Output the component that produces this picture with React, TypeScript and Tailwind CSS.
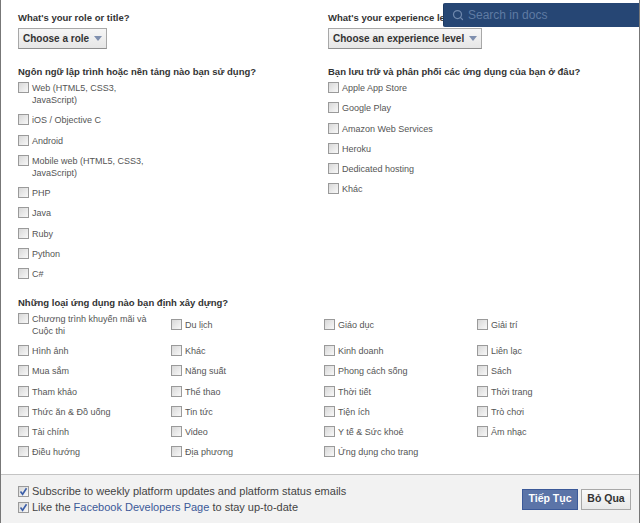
import React from "react";
import { Search } from "lucide-react";

function Box({ checked }: { checked?: boolean }) {
  return (
    <span className="shrink-0 w-[11px] h-[11px] border border-[#9a9a9a] bg-gradient-to-br from-[#d8d8d8] to-[#f8f8f8] flex items-center justify-center">
      {checked && (
        <svg viewBox="0 0 11 11" className="w-[11px] h-[11px] shrink-0">
          <path d="M2.5 5.5 L4.6 8.3 L8.5 2.2" fill="none" stroke="#3b5ea8" strokeWidth="1.6" />
        </svg>
      )}
    </span>
  );
}

function Item({ label, center, width }: { label: React.ReactNode; center?: boolean; width?: string }) {
  return (
    <div className={`flex ${center ? "items-center" : "items-start"} gap-[3px] mb-[8.3px]`}>
      <Box />
      <span className={`text-[9px] leading-[12px] text-[#555555] ${width ?? ""}`}>{label}</span>
    </div>
  );
}

function Dropdown({ label }: { label: string }) {
  return (
    <div className="flex w-fit items-center h-[21px] pl-[4px] pr-[4px] border border-[#a8a8a8] border-b-[#8f8f8f] bg-gradient-to-b from-[#f6f6f6] to-[#e6e6e6] text-[10px] font-bold text-[#333333]">
      <span>{label}</span>
      <span className="ml-[5px] w-0 h-0 border-l-[4px] border-r-[4px] border-t-[5px] border-l-transparent border-r-transparent border-t-[#7f8fae]" />
    </div>
  );
}

const languages = ["Web (HTML5, CSS3, JavaScript)", "iOS / Objective C", "Android", "Mobile web (HTML5, CSS3, JavaScript)", "PHP", "Java", "Ruby", "Python", "C#"];
const hosting = ["Apple App Store", "Google Play", "Amazon Web Services", "Heroku", "Dedicated hosting", "Khác"];
const apps = [
  "Chương trình khuyến mãi và Cuộc thi", "Du lịch", "Giáo dục", "Giải trí",
  "Hình ảnh", "Khác", "Kinh doanh", "Liên lạc",
  "Mua sắm", "Năng suất", "Phong cách sống", "Sách",
  "Tham khảo", "Thể thao", "Thời tiết", "Thời trang",
  "Thức ăn & Đồ uống", "Tin tức", "Tiện ích", "Trò chơi",
  "Tài chính", "Video", "Y tế & Sức khoẻ", "Âm nhạc",
  "Điều hướng", "Địa phương", "Ứng dụng cho trang",
];

const heading = "text-[9.5px] leading-[12px] font-bold text-[#333333]";

export default function App() {
  return (
    <div className="relative w-[640px] h-[523px] bg-white overflow-hidden border-l border-r border-[#777777] font-['Liberation_Sans',sans-serif]">
      <div className="absolute left-[442px] top-[3px] w-[197px] h-[24px] bg-[#264674] rounded-l-[2px] flex items-center pl-[8px] gap-[4px] border-l border-[#1d3a63]">
        <Search size={12} strokeWidth={2.5} className="text-[#6e87ac]" />
        <span className="text-[12px] text-[#5f7ba3]">Search in docs</span>
      </div>

      <div className="h-[474px] pl-[17px] pt-[12px]">
        <div className="grid grid-cols-[310px_1fr]">
          <div>
            <div className={heading}>What's your role or title?</div>
            <div className="mt-[4px]"><Dropdown label="Choose a role" /></div>
          </div>
          <div>
            <div className={heading}>What's your experience level?</div>
            <div className="mt-[4px]"><Dropdown label="Choose an experience level" /></div>
          </div>
        </div>

        <div className="grid grid-cols-[310px_1fr] mt-[17px]">
          <div>
            <div className={`${heading} mb-[4px]`}>Ngôn ngữ lập trình hoặc nền tảng nào bạn sử dụng?</div>
            {languages.map((l) => <Item key={l} label={l} width="w-[118px]" />)}
          </div>
          <div>
            <div className={`${heading} mb-[4px]`}>Bạn lưu trữ và phân phối các ứng dụng của bạn ở đâu?</div>
            {hosting.map((l) => <Item key={l} label={l} />)}
          </div>
        </div>

        <div className={`${heading} mt-[8px] mb-[4px]`}>Những loại ứng dụng nào bạn định xây dựng?</div>
        <div className="grid grid-cols-[153px_153px_153px_153px]">
          {apps.map((a, i) => (
            <Item key={a} label={a} center={i > 0 && i < 4} width={i === 0 ? "w-[118px]" : undefined} />
          ))}
        </div>
      </div>

      <div className="h-[49px] border-t border-[#c4c4c4] bg-[#f2f2f2] pl-[17px] pr-[8px] flex items-center justify-between">
        <div className="text-[11px] leading-[16px] text-[#444444]">
          <div className="flex items-center gap-[3px]"><Box checked /><span>Subscribe to weekly platform updates and platform status emails</span></div>
          <div className="flex items-center gap-[3px]"><Box checked /><span>Like the <span className="text-[#3b5998]">Facebook Developers Page</span> to stay up-to-date</span></div>
        </div>
        <div className="flex gap-[3px] font-bold text-[10.5px]">
          <div className="h-[21px] w-[56px] flex items-center justify-center bg-[#5b74a8] border border-[#3b5998] text-white">Tiếp Tục</div>
          <div className="h-[21px] w-[50px] flex items-center justify-center bg-gradient-to-b from-[#fafafa] to-[#e8e8e8] border border-[#a8a8a8] text-[#333333]">Bỏ Qua</div>
        </div>
      </div>
    </div>
  );
}
